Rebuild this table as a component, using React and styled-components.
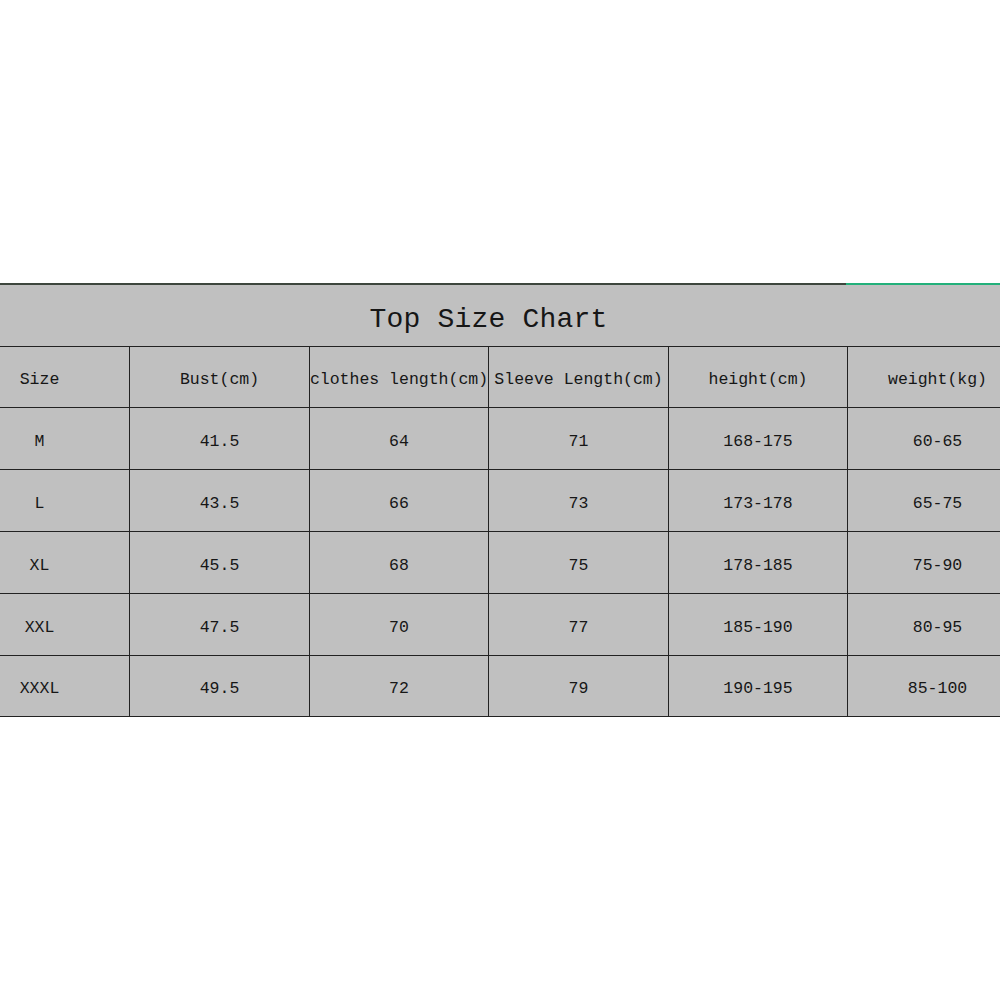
import React from "react";
import styled, { createGlobalStyle } from "styled-components";

const Global = createGlobalStyle`
  html, body { margin: 0; padding: 0; background: #ffffff; }
  body { font-family: "Liberation Mono", "DejaVu Sans Mono", monospace; }
`;

const Page = styled.div`
  width: 1000px;
  height: 1000px;
  overflow: hidden;
  padding-top: 283px;
  box-sizing: border-box;
`;

const TopRule = styled.div`
  display: flex;
  height: 2px;
`;

const RuleSegment = styled.div`
  height: 2px;
  background: ${(p) => p.$color};
  flex: ${(p) => (p.$grow ? "1" : `0 0 ${p.$width}px`)};
`;

const Table = styled.div`
  width: 1077px;
  margin-left: -50px;
  background: #c0c0c0;
  color: #161616;
  border-bottom: 1px solid #222;
`;

const TitleRow = styled.div`
  height: 62px;
  display: flex;
  align-items: center;
  justify-content: center;
  padding-top: 7px;
  box-sizing: border-box;
  border-bottom: 1px solid #222;
  font-size: 28px;
  letter-spacing: 0.2px;
`;

const Row = styled.div`
  display: grid;
  grid-template-columns: 180px 180px 179px 180px 179px 179px;
  box-sizing: border-box;
  height: ${(p) => p.$h}px;
  border-bottom: ${(p) => (p.$last ? "none" : "1px solid #222")};
`;

const Cell = styled.div`
  box-sizing: border-box;
  display: flex;
  align-items: center;
  justify-content: center;
  padding-top: 5px;
  border-right: 1px solid #222;
  white-space: nowrap;
  font-size: 16.5px;
  &:last-child { border-right: none; }
`;

const headers = ["Size", "Bust(cm)", "clothes length(cm)", "Sleeve Length(cm)", "height(cm)", "weight(kg)"];
const rows = [
  ["M", "41.5", "64", "71", "168-175", "60-65"],
  ["L", "43.5", "66", "73", "173-178", "65-75"],
  ["XL", "45.5", "68", "75", "178-185", "75-90"],
  ["XXL", "47.5", "70", "77", "185-190", "80-95"],
  ["XXXL", "49.5", "72", "79", "190-195", "85-100"],
];

export default function App() {
  return (
    <>
      <Global />
      <Page>
        <TopRule>
          <RuleSegment $width={846} $color="#3d463d" />
          <RuleSegment $grow $color="#22b07a" />
        </TopRule>
        <Table>
          <TitleRow>Top Size Chart</TitleRow>
          <Row $h={61}>
            {headers.map((h) => (
              <Cell key={h}>{h}</Cell>
            ))}
          </Row>
          {rows.map((r, i) => {
            const last = i === rows.length - 1;
            return (
              <Row key={r[0]} $h={last ? 60 : 62} $last={last}>
                {r.map((v, j) => (
                  <Cell key={j}>{v}</Cell>
                ))}
              </Row>
            );
          })}
        </Table>
      </Page>
    </>
  );
}
